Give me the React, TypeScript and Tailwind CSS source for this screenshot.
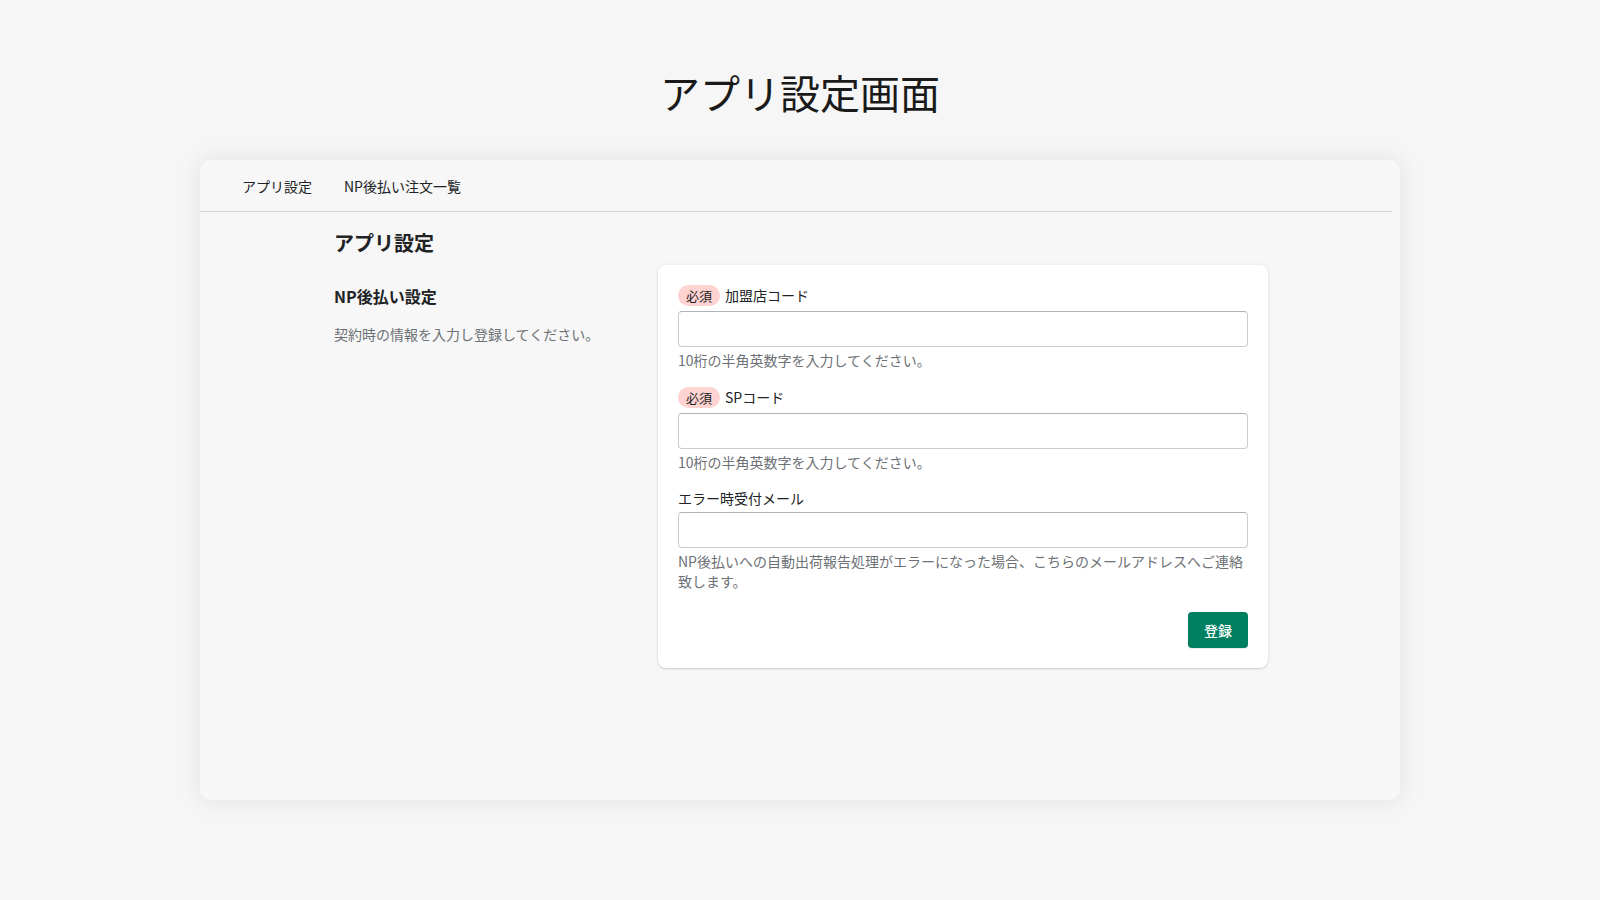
import React, { useState } from "react";

const font = { fontFamily: '"Noto Sans CJK JP", "Noto Sans", sans-serif' };

type FieldProps = {
  label: string;
  required?: boolean;
  help: React.ReactNode;
  value: string;
  onChange: (v: string) => void;
  className?: string;
};

const Field = ({ label, required, help, value, onChange, className = "" }: FieldProps) => (
  <div className={`flex flex-col ${className}`}>
    {required ? (
      <div className="flex items-center h-[21px]">
        <span className="h-[21px] px-2 rounded-full bg-[#fed3d1] text-[13px] leading-[21px] text-[#202223] mr-[5px]">
          必須
        </span>
        <span className="text-[14px] leading-[21px] text-[#202223]">{label}</span>
      </div>
    ) : (
      <div className="text-[14px] leading-[20px] text-[#202223]">{label}</div>
    )}
    <input
      className={`${required ? "mt-[5px]" : "mt-1"} h-9 w-full rounded-[4px] border border-[#c9cccf] border-t-[#aeb4b9] bg-white px-3 text-[14px] outline-none`}
      value={value}
      onChange={e => onChange(e.target.value)}
    />
    <p className="mt-[3px] text-[14px] leading-[20px] text-[#6d7175]">{help}</p>
  </div>
);

export default function App() {
  const [tab, setTab] = useState(0);
  const [shopCode, setShopCode] = useState("");
  const [spCode, setSpCode] = useState("");
  const [mail, setMail] = useState("");

  const tabs = ["アプリ設定", "NP後払い注文一覧"];

  return (
    <div className="min-h-screen bg-[#f6f6f6] pt-[68px] pb-[100px] text-[#202223]" style={font}>
      <h1 className="text-center text-[40px] leading-[48px] font-normal text-[#1a1a1a]">アプリ設定画面</h1>

      <div className="mx-auto mt-[44px] w-[1200px] h-[640px] rounded-[10px] bg-[#f7f7f7] shadow-[0_0_24px_rgba(0,0,0,0.09)]">
        {/* Tabs */}
        <div className="mr-2 flex h-[52px] items-center border-b border-[#d2d2d2] pl-[26px]">
          {tabs.map((t, i) => (
            <button
              key={t}
              onClick={() => setTab(i)}
              className="px-4 text-[14px] leading-[20px] text-[#202223]"
            >
              {t}
            </button>
          ))}
        </div>

        {tab === 0 && (
          <div className="pl-[134px] pt-[17px]">
            <h2 className="text-[20px] leading-[28px] font-bold text-[#202223]">アプリ設定</h2>

            <div className="mt-2 flex">
              <div className="w-[324px] pt-[19px] pr-5">
                <h3 className="text-[16px] leading-[24px] font-bold">NP後払い設定</h3>
                <p className="mt-4 text-[14px] leading-[20px] text-[#6d7175]">
                  契約時の情報を入力し登録してください。
                </p>
              </div>

              <div className="w-[610px] rounded-[8px] bg-white px-5 pt-5 pb-5 shadow-[0_0_5px_rgba(23,24,24,0.05),0_1px_2px_rgba(0,0,0,0.15)]">
                <div className="flex flex-col gap-4">
                  <Field
                    label="加盟店コード"
                    required
                    help="10桁の半角英数字を入力してください。"
                    value={shopCode}
                    onChange={setShopCode}
                  />
                  <Field
                    className="mt-px"
                    label="SPコード"
                    required
                    help="10桁の半角英数字を入力してください。"
                    value={spCode}
                    onChange={setSpCode}
                  />
                  <Field
                    label="エラー時受付メール"
                    help={
                      <>
                        NP後払いへの自動出荷報告処理がエラーになった場合、こちらのメールアドレスへご連絡
                        <br />
                        致します。
                      </>
                    }
                    value={mail}
                    onChange={setMail}
                  />
                </div>
                <div className="mt-[21px] flex justify-end">
                  <button className="h-9 w-[60px] rounded-[4px] bg-[#008060] text-[14px] font-medium text-white shadow-[0_1px_0_rgba(0,0,0,0.08)]">
                    登録
                  </button>
                </div>
              </div>
            </div>
          </div>
        )}
      </div>
    </div>
  );
}
